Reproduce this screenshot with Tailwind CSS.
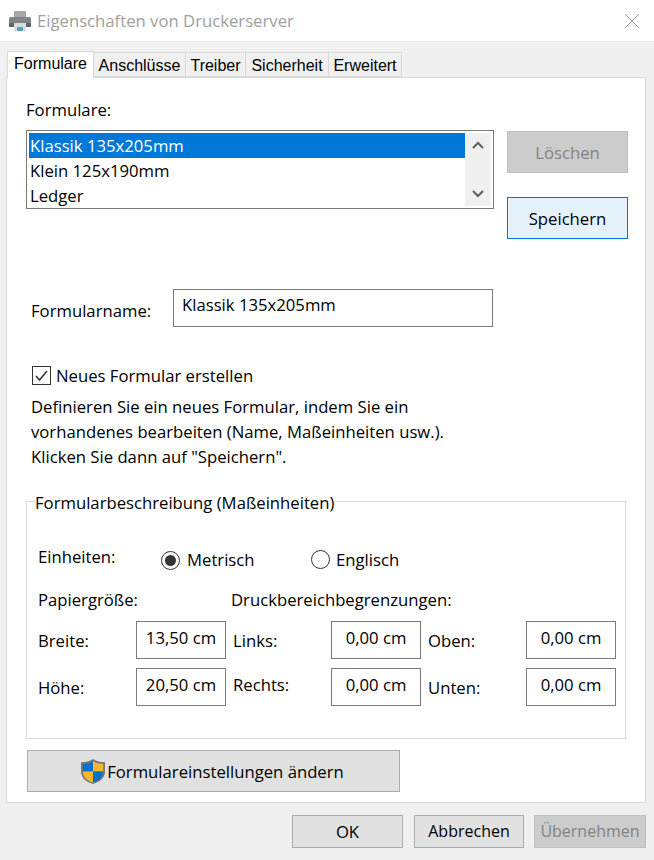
<!DOCTYPE html>
<html lang="de">
  <head>
    <meta charset="UTF-8" />
    <title>Eigenschaften von Druckerserver</title>
    <script src="https://cdn.jsdelivr.net/npm/@tailwindcss/browser@4"></script>
  </head>
  <body class="w-[654px] h-[860px] overflow-hidden bg-[#f0f0f0] font-['Open_Sans','Noto_Sans',sans-serif] text-[16.7px] leading-[25px] text-black">
    <!-- title bar -->
    <div class="h-[41px] bg-white flex items-center pl-[8px] pr-[14px]">
      <svg class="w-[24px] h-[24px]" viewBox="0 0 24 24">
        <rect x="6" y="2" width="12" height="7" fill="#a8a8a8" />
        <rect x="1" y="8" width="22" height="10" rx="2" fill="#7f8486" />
        <rect x="1" y="14" width="22" height="4" fill="#5f6466" />
        <rect x="6" y="14" width="12" height="8" fill="#d9dcdc" />
        <rect x="9" y="18" width="6" height="4" fill="#5fa3b8" />
      </svg>
      <span class="ml-[5px] text-[#a0a0a0] text-[16.7px]">Eigenschaften von Druckerserver</span>
      <svg class="ml-auto w-[16px] h-[16px]" viewBox="0 0 16 16" fill="none" stroke="#9a9a9a" stroke-width="1">
        <path d="M1 1 15 15M15 1 1 15" />
      </svg>
    </div>

    <!-- tabs -->
    <div class="relative z-10 h-[37px] pl-[7px] flex items-end font-['Liberation_Sans',sans-serif] text-[16px]">
      <div class="w-[87px] h-[27px] bg-white border border-b-0 border-[#d9d9d9] flex items-start justify-center leading-[24px]">Formulare</div>
      <div class="w-[92px] h-[25px] mb-px bg-[#f0f0f0] border border-l-0 border-[#d9d9d9] text-center leading-[25px]">Anschlüsse</div>
      <div class="w-[60px] h-[25px] mb-px bg-[#f0f0f0] border border-l-0 border-[#d9d9d9] text-center leading-[25px]">Treiber</div>
      <div class="w-[83px] h-[25px] mb-px bg-[#f0f0f0] border border-l-0 border-[#d9d9d9] text-center leading-[25px]">Sicherheit</div>
      <div class="w-[73px] h-[25px] mb-px bg-[#f0f0f0] border border-l-0 border-[#d9d9d9] text-center leading-[25px]">Erweitert</div>
    </div>

    <!-- panel -->
    <div class="ml-[6px] mt-[-1px] w-[640px] h-[726px] bg-white border border-[#d9d9d9] pt-[19px] pl-[19px]">
      <div class="h-[25px]">Formulare:</div>
      <div class="mt-[8px] flex items-start">
        <div class="w-[468px] h-[79px] border border-[#7a7a7a] p-[2px] flex">
          <div class="flex-1">
            <div class="h-[25px] bg-[#0078d7] text-white pl-[1px]">Klassik 135x205mm</div>
            <div class="h-[25px] pl-[1px]">Klein 125x190mm</div>
            <div class="h-[25px] pl-[1px]">Ledger</div>
          </div>
          <div class="w-[26px] bg-[#f0f0f0] flex flex-col justify-between py-[8px] items-center">
            <svg class="w-[12px] h-[8px]" viewBox="0 0 12 8" fill="none" stroke="#606060" stroke-width="2"><path d="M1 7 6 2l5 5" /></svg>
            <svg class="w-[12px] h-[8px]" viewBox="0 0 12 8" fill="none" stroke="#606060" stroke-width="2"><path d="M1 1l5 5 5-5" /></svg>
          </div>
        </div>
        <div class="ml-[13px] w-[121px]">
          <div class="mt-px h-[42px] bg-[#cccccc] border border-[#bfbfbf] text-[#838383] flex items-center justify-center">Löschen</div>
          <div class="mt-[24px] h-[42px] bg-[#e5f1fb] border border-[#0078d7] flex items-center justify-center">Speichern</div>
        </div>
      </div>

      <div class="mt-[50px] ml-[5px] flex items-center h-[38px]">
        <span class="w-[142px] mt-[4px]">Formularname:</span>
        <div class="w-[320px] h-[38px] border border-[#7a7a7a] pl-[8px] pt-[2px]">Klassik 135x205mm</div>
      </div>

      <div class="mt-[36px] ml-[6px] flex items-center h-[25px]">
        <span class="w-[19px] h-[19px] border border-[#333333] flex items-center justify-center">
          <svg class="w-[13px] h-[13px]" viewBox="0 0 13 13" fill="none" stroke="#333333" stroke-width="1.5"><path d="M1 7l3.5 4L12 2" /></svg>
        </span>
        <span class="ml-[5px]">Neues Formular erstellen</span>
      </div>
      <p class="mt-[6px] ml-[5px]">Definieren Sie ein neues Formular, indem Sie ein<br />vorhandenes bearbeiten (Name, Maßeinheiten usw.).<br />Klicken Sie dann auf "Speichern".</p>

      <!-- group -->
      <div class="relative mt-[32px] w-[600px] h-[238px] border border-[#d9d9d9] pl-[11px] pt-[43px]">
        <span class="absolute left-[8px] top-[-12px] bg-white pr-[1px]">Formularbeschreibung (Maßeinheiten)</span>
        <div class="flex items-center h-[25px]">
          <span class="w-[123px] mt-[-2px]">Einheiten:</span>
          <span class="w-[19px] h-[19px] mt-[5px] rounded-full border border-[#333333] flex items-center justify-center">
            <span class="w-[11px] h-[11px] rounded-full bg-[#333333]"></span>
          </span>
          <span class="ml-[7px] mt-[4px] w-[124px]">Metrisch</span>
          <span class="w-[19px] h-[19px] mt-[3px] rounded-full border border-[#333333]"></span>
          <span class="ml-[6px] mt-[4px]">Englisch</span>
        </div>
        <div class="mt-[17px] flex h-[25px]">
          <span class="w-[193px]">Papiergröße:</span>
          <span>Druckbereichbegrenzungen:</span>
        </div>
        <div class="mt-[9px] grid grid-cols-[98px_97px_98px_97px_98px_90px] grid-rows-[38px_38px] gap-y-[9px] items-center">
          <span class="mt-[1px]">Breite:</span>
          <div class="w-[90px] h-[38px] border border-[#7a7a7a] text-center pt-[3px]">13,50 cm</div>
          <span class="mt-[1px]">Links:</span>
          <div class="w-[90px] h-[38px] border border-[#7a7a7a] text-center pt-[3px]">0,00 cm</div>
          <span class="mt-[1px]">Oben:</span>
          <div class="w-[90px] h-[38px] border border-[#7a7a7a] text-center pt-[3px]">0,00 cm</div>
          <span class="mt-[1px]">Höhe:</span>
          <div class="w-[90px] h-[38px] border border-[#7a7a7a] text-center pt-[3px]">20,50 cm</div>
          <span class="mt-[-5px]">Rechts:</span>
          <div class="w-[90px] h-[38px] border border-[#7a7a7a] text-center pt-[3px]">0,00 cm</div>
          <span class="mt-[1px]">Unten:</span>
          <div class="w-[90px] h-[38px] border border-[#7a7a7a] text-center pt-[3px]">0,00 cm</div>
        </div>
      </div>

      <div class="mt-[11px] ml-[1px] w-[373px] h-[42px] bg-[#e1e1e1] border border-[#adadad] flex items-center justify-center">
        <svg class="w-[24px] h-[25px] ml-[-2px]" viewBox="2 1 20 23" preserveAspectRatio="none">
          <path d="M12 1c3 2 6 3 10 3v9c0 5-4 9-10 11C6 22 2 18 2 13V4c4 0 7-1 10-3Z" fill="#777777" />
          <path d="M12 3C9 5 6 5.500 3.500 5.500V12.500H12Z" fill="#0a6fc9" />
          <path d="M12 3c3 2 6 2.500 8.500 2.500v7H12Z" fill="#f9b82c" />
          <path d="M3.500 12.500H12V22.500C7 21 3.500 17.500 3.500 12.500Z" fill="#f9b82c" />
          <path d="M12 12.500h8.500C20.500 17.500 17 21 12 22.500Z" fill="#0a6fc9" />
        </svg>
        <span class="ml-[2px]">Formulareinstellungen ändern</span>
      </div>
    </div>

    <!-- footer buttons -->
    <div class="mt-[12px] pl-[292px] flex">
      <div class="w-[111px] h-[33px] bg-[#e1e1e1] border border-[#adadad] flex items-center justify-center">OK</div>
      <div class="ml-[11px] w-[110px] h-[33px] bg-[#e1e1e1] border border-[#adadad] flex items-center justify-center text-[16px]">Abbrechen</div>
      <div class="ml-[10px] w-[112px] h-[33px] bg-[#cccccc] border border-[#bfbfbf] text-[#838383] flex items-center justify-center text-[16px]">Übernehmen</div>
    </div>
  </body>
</html>
